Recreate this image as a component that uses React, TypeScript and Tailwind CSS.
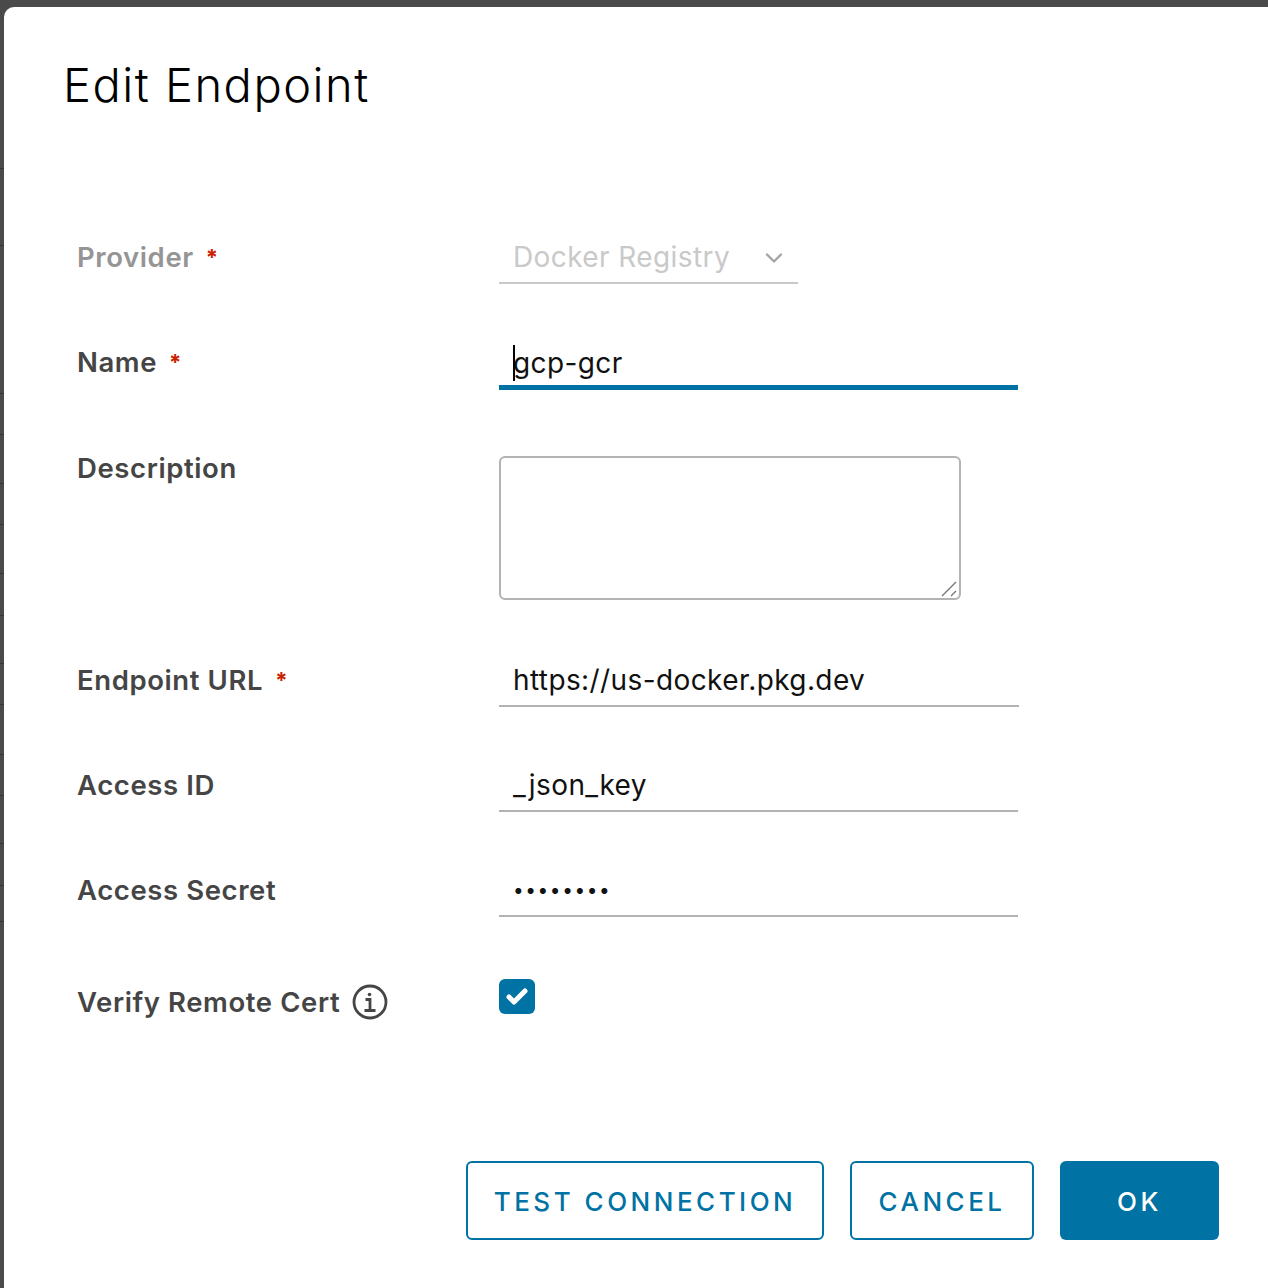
import { Check, ChevronDown } from 'lucide-react'

const stripLines = [161, 238, 386, 427, 476, 517, 566, 608, 656, 697, 747, 788, 836, 878, 914]

function Backdrop() {
  return (
    <div className="relative w-[4px] shrink-0 bg-[#4a4a4a]">
      {stripLines.map((y) => (
        <div key={y} className="absolute left-0 h-px w-full bg-[#33372f]" style={{ top: y }} />
      ))}
    </div>
  )
}

function Label({ children, required, muted }: { children: React.ReactNode; required?: boolean; muted?: boolean }) {
  return (
    <div className={`flex h-[44px] w-[422px] shrink-0 items-center pb-[10px] text-[27.5px] font-semibold leading-[32px] tracking-[0.6px] ${muted ? 'text-[#959595]' : 'text-[#454545]'}`}>
      <span>{children}</span>
      {required && <span className="ml-[12px] text-[22px] font-bold text-[#c92100]">*</span>}
    </div>
  )
}

function TextField({ value, width = 'w-[519px]', active, small }: { value: string; width?: string; active?: boolean; small?: boolean }) {
  return (
    <div className={`relative flex items-end px-[14px] leading-[34px] text-[#111] ${small ? 'text-[19px] tracking-[1.6px]' : 'text-[28px] tracking-[0.4px]'} ${width} ${active ? 'h-[45px] border-b-[5px] border-[#0072a3] pb-[5px]' : `h-[44px] border-b-2 border-[#b3b3b3] ${small ? 'pb-[7px]' : 'pb-[8px]'}`}`}>
      {active && <span className="absolute left-[14px] top-0 h-[36px] w-[2px] bg-black" />}
      {value}
    </div>
  )
}

export default function App() {
  return (
    <div className="flex h-[1288px] w-[1268px] overflow-hidden bg-[#4a4a4a] pt-[7px] font-['Inter',sans-serif]">
      <Backdrop />
      <div className="flex-1 rounded-tl-[10px] bg-white">
        <h1 className="ml-[59px] mt-[48px] h-[60px] text-[47px] font-light leading-[60px] tracking-[1.5px] text-black">
          Edit Endpoint
        </h1>
        <div className="ml-[73px] mt-[125px]">
          <div className="flex h-[44px]">
            <Label required muted>Provider</Label>
            <div className="flex h-[44px] w-[299px] items-end justify-between border-b-2 border-[#c9c9c9] pb-[8px] pl-[14px] pr-[10px] text-[28px] leading-[34px] tracking-[0.4px] text-[#c9c9c9]">
              <span>Docker Registry</span>
              <ChevronDown size={28} strokeWidth={2} className="mb-[2px] text-[#a3a3a3]" />
            </div>
          </div>
          <div className="mt-[61px] flex h-[46px]">
            <Label required>Name</Label>
            <TextField value="gcp-gcr" active />
          </div>
          <div className="mt-[65px] flex h-[144px]">
            <div className="-mt-[5px] w-[422px]">
              <Label>Description</Label>
            </div>
            <div className="relative">
              <textarea className="block h-[144px] w-[462px] resize-none rounded-[6px] border-2 border-[#b3b3b3] bg-white outline-none" />
              <svg className="absolute bottom-[2px] right-[2px]" width="18" height="18" viewBox="0 0 18 18" stroke="#777" strokeWidth="1.4">
                <path d="M1 16 15 2M10 16l5-5" />
              </svg>
            </div>
          </div>
          <div className="mt-[63px] flex h-[45px]">
            <Label required>Endpoint URL</Label>
            <TextField value="https://us-docker.pkg.dev" width="w-[520px]" />
          </div>
          <div className="mt-[60px] flex h-[44px]">
            <Label>Access ID</Label>
            <TextField value="_json_key" />
          </div>
          <div className="mt-[61px] flex h-[44px]">
            <Label>Access Secret</Label>
            <TextField value="••••••••" small />
          </div>
          <div className="mt-[62px] flex h-[46px]">
            <div className="flex w-[422px] shrink-0 items-center gap-[12px] text-[27.5px] font-semibold leading-[32px] tracking-[0.6px] text-[#454545]">
              <span>Verify Remote Cert</span>
              <svg width="36" height="36" viewBox="0 0 36 36" fill="none" stroke="#454545" strokeWidth="2.8">
                <circle cx="18" cy="18" r="16" />
                <circle cx="17.5" cy="10.5" r="1.8" fill="#454545" stroke="none" />
                <path d="M13.5 15.5h4.5v11M12.5 26.5h11" />
              </svg>
            </div>
            <div className="flex h-[35px] w-[36px] items-center justify-center rounded-[6px] bg-[#0072a3]">
              <Check size={24} strokeWidth={5} className="text-white" />
            </div>
          </div>
        </div>
        <div className="mt-[136px] flex justify-end gap-[26px] pr-[49px] text-[26px] font-medium tracking-[3.5px]">
          <button className="flex h-[79px] w-[358px] items-center justify-center rounded-[6px] border-2 border-[#0072a3] pt-[2px] text-[#0072a3]">TEST CONNECTION</button>
          <button className="flex h-[79px] w-[184px] items-center justify-center rounded-[6px] border-2 border-[#0072a3] pt-[2px] text-[#0072a3]">CANCEL</button>
          <button className="flex h-[79px] w-[159px] items-center justify-center rounded-[6px] bg-[#0072a3] pt-[2px] text-white">OK</button>
        </div>
      </div>
    </div>
  )
}
